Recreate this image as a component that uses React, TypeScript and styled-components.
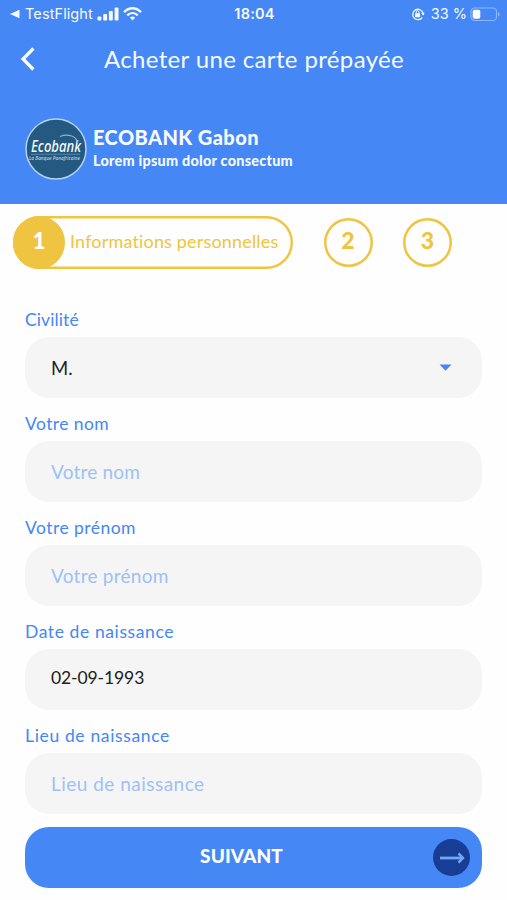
import React from "react";
import styled, { createGlobalStyle } from "styled-components";

const BLUE = "#4487f5";
const GOLD = "#efc440";

const GlobalStyle = createGlobalStyle`
  * { box-sizing: border-box; }
  body { margin: 0; background: #fefefe; }
  button, input { font: inherit; }
`;

const Screen = styled.main`
  width: 507px;
  height: 900px;
  overflow: hidden;
  background: #fefefe;
  font-family: Lato, sans-serif;
`;

const Header = styled.header`
  height: 204px;
  background: ${BLUE};
  color: #f6faff;
`;

const StatusBar = styled.div`
  display: grid;
  grid-template-columns: 1fr auto 1fr;
  align-items: center;
  height: 28px;
  padding: 0 7px 0 9px;
  font-family: Inter, sans-serif;
`;

const StatusGroup = styled.div<{ $end?: boolean }>`
  display: flex;
  align-items: center;
  justify-content: ${(p) => (p.$end ? "flex-end" : "flex-start")};
`;

const StatusText = styled.span<{ $weight?: number; $spacing?: number }>`
  font-size: 14.5px;
  font-weight: ${(p) => p.$weight ?? 400};
  letter-spacing: ${(p) => p.$spacing ?? 0}px;
  line-height: 28px;
  white-space: nowrap;
`;

const Nav = styled.div`
  display: grid;
  grid-template-columns: 56px 1fr 55px;
  align-items: center;
  height: 62px;
`;

const BackButton = styled.button`
  display: flex;
  height: 40px;
  padding: 7px 0 0 20px;
  border: 0;
  background: none;
  color: #fff;
`;

const Title = styled.h1`
  margin: 0;
  font-size: 24px;
  font-weight: 400;
  line-height: 62px;
  letter-spacing: 0.36px;
  text-align: center;
  white-space: nowrap;
`;

const Bank = styled.div`
  display: flex;
  align-items: center;
  gap: 6px;
  padding: 28px 0 0 25px;
`;

const BankName = styled.div`
  font-size: 20px;
  font-weight: 900;
  line-height: 24px;
  letter-spacing: 0.42px;
`;

const BankNote = styled.div`
  font-size: 14.4px;
  font-weight: 900;
  line-height: 24px;
  letter-spacing: 0.25px;
`;

const Steps = styled.nav`
  display: flex;
  align-items: center;
  height: 53px;
  margin: 12px 0 0 13px;
`;

const CurrentStep = styled.div`
  display: flex;
  align-items: center;
  width: 280px;
  height: 53px;
  border-radius: 27px;
  box-shadow: inset 0 0 0 2.4px ${GOLD};
  color: ${GOLD};
`;

const StepDisc = styled.div`
  width: 52px;
  height: 53px;
  border-radius: 50%;
  background: ${GOLD};
  color: #fff;
  font-size: 22.5px;
  font-weight: 900;
  line-height: 50px;
  text-align: center;
`;

const StepTitle = styled.span`
  margin-left: 5px;
  font-size: 18px;
  line-height: 50px;
  padding-bottom: 3px;
  letter-spacing: 0.17px;
  white-space: nowrap;
`;

const StepRing = styled.div`
  width: 49px;
  height: 49px;
  margin-left: 30.5px;
  box-shadow: inset 0 0 0 2.5px ${GOLD};
  border-radius: 50%;
  color: ${GOLD};
  font-size: 23px;
  font-weight: 900;
  line-height: 45px;
  text-align: center;
`;

const Form = styled.form`
  width: 457px;
  margin: 41px 0 0 25px;
`;

const FieldList = styled.div`
  display: grid;
  gap: 16px;
`;

const FieldRow = styled.label`
  display: flex;
  flex-direction: column;
  gap: 7px;
`;

const FieldLabel = styled.span<{ $spacing: number }>`
  color: ${BLUE};
  font-size: 17.5px;
  line-height: 20px;
  letter-spacing: ${(p) => p.$spacing}px;
`;

const FieldBox = styled.span<{ $placeholder?: boolean; $lift?: number; $spacing: number; $size?: number }>`
  display: flex;
  align-items: center;
  justify-content: space-between;
  height: 61px;
  padding: 0 30px ${(p) => p.$lift ?? 0}px 26px;
  border-radius: 24px;
  background: #f5f5f5;
  color: ${(p) => (p.$placeholder ? "#9dc1f5" : "#202020")};
  font-size: ${(p) => p.$size ?? 19}px;
  letter-spacing: ${(p) => p.$spacing}px;
`;

const SubmitButton = styled.button`
  display: grid;
  grid-template-columns: 1fr 62px;
  align-items: center;
  width: 100%;
  height: 61px;
  margin-top: 13px;
  padding: 0;
  border: 0;
  border-radius: 24px;
  background: ${BLUE};
  color: #fff;
`;

const SubmitText = styled.span`
  padding: 0 0 5px 38px;
  font-size: 19px;
  font-weight: 900;
  letter-spacing: 0.1px;
`;

const ArrowDisc = styled.span`
  display: flex;
  align-items: center;
  justify-content: center;
  width: 37px;
  height: 37px;
  margin-left: 13px;
  border-radius: 50%;
  background: #183d94;
`;

const BackTriangle = styled.svg`
  margin-right: 5px;
`;

const Signal = styled.svg`
  margin-left: 4px;
`;

const Wifi = styled.svg`
  margin-left: 4px;
`;

const LockIcon = styled.svg`
  margin-right: 6px;
`;

const Battery = styled.svg`
  margin-left: 3px;
`;

const LogoDrawing = styled.svg`
  flex: none;
  overflow: visible;
`;

const BankLogo = () => (
  <LogoDrawing width="62" height="62" viewBox="0 0 62 62">
    <circle cx="31" cy="31" r="30" fill="#245a82" stroke="#b5d2f1" strokeWidth="1.5" />
    <text x="6" y="34" fill="#f3f8fb" fontFamily="Noto Sans, sans-serif" fontSize="15.5" fontStyle="italic" fontWeight="500" textLength="50" lengthAdjust="spacingAndGlyphs">Ecobank</text>
    <path d="M35 18.5C43 15.5 52 18 52.5 25" fill="none" stroke="#8eb3cb" strokeWidth="1.2" />
    <path d="M6 36.3h49" stroke="#6998b6" strokeWidth=".7" />
    <text x="4" y="42.3" fill="#b4cede" fontFamily="Open Sans, sans-serif" fontSize="5" fontStyle="italic" fontWeight="600" textLength="51" lengthAdjust="spacingAndGlyphs">La Banque Panafricaine</text>
  </LogoDrawing>
);

interface FieldData {
  label: string;
  value: string;
  placeholder?: boolean;
  select?: boolean;
  lift?: number;
  size?: number;
  labelSpacing: number;
  valueSpacing: number;
}

const fields: FieldData[] = [
  { label: "Civilité", value: "M.", select: true, size: 18.5, labelSpacing: 0.1, valueSpacing: 0 },
  { label: "Votre nom", value: "Votre nom", placeholder: true, labelSpacing: 0.42, valueSpacing: 0.2 },
  { label: "Votre prénom", value: "Votre prénom", placeholder: true, labelSpacing: 0.45, valueSpacing: 0.26 },
  { label: "Date de naissance", value: "02-09-1993", lift: 4, size: 17.5, labelSpacing: 0.6, valueSpacing: -0.1 },
  { label: "Lieu de naissance", value: "Lieu de naissance", placeholder: true, labelSpacing: 0.65, valueSpacing: 0.48 },
];

const Field = ({ label, value, placeholder, select, lift, size, labelSpacing, valueSpacing }: FieldData) => (
  <FieldRow>
    <FieldLabel $spacing={labelSpacing}>{label}</FieldLabel>
    <FieldBox $placeholder={placeholder} $lift={lift} $spacing={valueSpacing} $size={size}>
      {value}
      {select && (
        <svg width="13" height="7" viewBox="0 0 13 7">
          <path d="M.5 .5h12L6.5 6.8Z" fill={BLUE} />
        </svg>
      )}
    </FieldBox>
  </FieldRow>
);

export default function App() {
  return (
    <Screen>
      <GlobalStyle />
      <Header>
        <StatusBar>
          <StatusGroup>
            <BackTriangle width="11" height="10" viewBox="0 0 11 10">
              <path d="M1 5 10.5 .8v8.4Z" fill="currentColor" />
            </BackTriangle>
            <StatusText $spacing={0.1}>TestFlight</StatusText>
            <Signal width="22" height="14" viewBox="0 0 22 14" fill="currentColor">
              <rect x=".5" y="9.5" width="3.9" height="4" rx="1" />
              <rect x="6.2" y="7" width="3.9" height="6.5" rx="1" />
              <rect x="11.9" y="4" width="3.9" height="9.5" rx="1" />
              <rect x="17.6" y=".5" width="3.9" height="13" rx="1" />
            </Signal>
            <Wifi width="19" height="14" viewBox="0 0 19 14" fill="none" stroke="currentColor" strokeWidth="2.3">
              <path d="M1 5.2C6-.1 13-.1 18 5.2" />
              <path d="M4.2 8.4c3.2-3.1 7.4-3.1 10.6 0" />
              <path d="m6.8 10.6 2.7 2.8 2.7-2.8c-1.6-1.4-3.8-1.4-5.4 0Z" fill="currentColor" stroke="none" />
            </Wifi>
          </StatusGroup>
          <StatusText $weight={600} $spacing={0.2}>18:04</StatusText>
          <StatusGroup $end>
            <LockIcon width="14" height="14" viewBox="0 0 14 14" fill="none" stroke="currentColor">
              <path d="M11.2 10.5A5.2 5.2 0 1 1 12 6.2" strokeWidth="1.3" />
              <path d="m10.2 6 3.4-.3-1.4 3Z" fill="currentColor" stroke="none" />
              <rect x="4.1" y="6.2" width="5" height="4" rx=".7" fill="currentColor" stroke="none" />
              <path d="M5.2 6.4V5.2a1.4 1.4 0 0 1 2.8 0v1.2" strokeWidth="1" />
            </LockIcon>
            <StatusText>33 %</StatusText>
            <Battery width="30" height="15" viewBox="0 0 30 15">
              <rect x="1" y="1" width="25.5" height="12.5" rx="3.6" fill="none" stroke="#8db7fa" strokeWidth="1.2" />
              <rect x="2.7" y="2.7" width="7.6" height="9.1" rx="1.8" fill="#fff" />
              <path d="M28 5c2 .8 2 3.8 0 4.6Z" fill="#8db7fa" />
            </Battery>
          </StatusGroup>
        </StatusBar>
        <Nav>
          <BackButton type="button" aria-label="Retour">
            <svg width="16" height="26" viewBox="0 0 16 26">
              <path d="M13.4 2.5 3 13l10.4 10.5" fill="none" stroke="currentColor" strokeWidth="3.2" />
            </svg>
          </BackButton>
          <Title>Acheter une carte prépayée</Title>
        </Nav>
        <Bank>
          <BankLogo />
          <div>
            <BankName>ECOBANK Gabon</BankName>
            <BankNote>Lorem ipsum dolor consectum</BankNote>
          </div>
        </Bank>
      </Header>
      <Steps>
        <CurrentStep>
          <StepDisc>1</StepDisc>
          <StepTitle>Informations personnelles</StepTitle>
        </CurrentStep>
        <StepRing>2</StepRing>
        <StepRing>3</StepRing>
      </Steps>
      <Form>
        <FieldList>
          {fields.map((f) => (
            <Field key={f.label} {...f} />
          ))}
        </FieldList>
        <SubmitButton type="button">
          <SubmitText>SUIVANT</SubmitText>
          <ArrowDisc>
            <svg width="26" height="14" viewBox="0 0 26 14">
              <path d="M1 7h22" fill="none" stroke="#70a8f5" strokeWidth="2.8" />
              <path d="m19.5 2.4 4.4 4.6-4.4 4.6" fill="none" stroke="#70a8f5" strokeWidth="2.6" />
            </svg>
          </ArrowDisc>
        </SubmitButton>
      </Form>
    </Screen>
  );
}
